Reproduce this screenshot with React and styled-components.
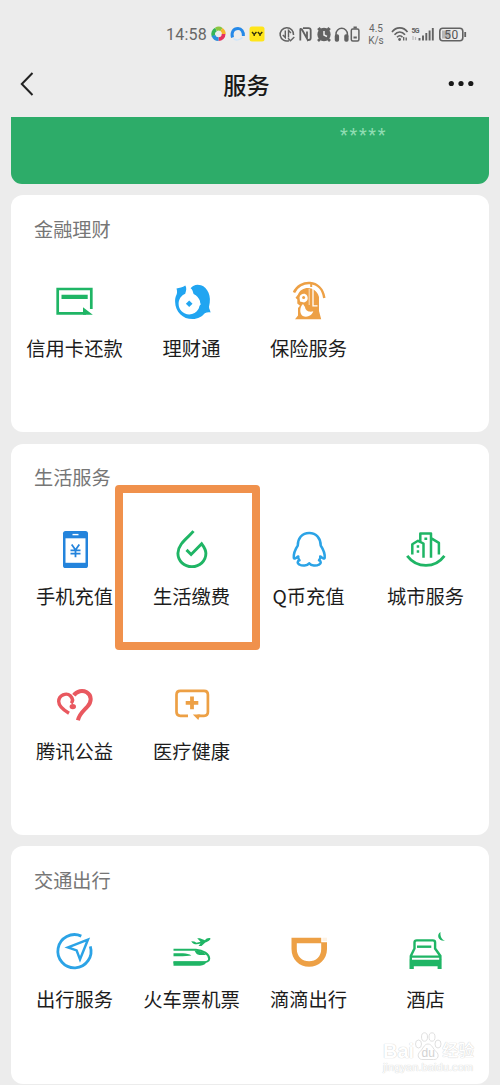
import React from 'react';
import styled, { createGlobalStyle } from 'styled-components';

const GREEN = '#1fb565';
const BLUE = '#2ba3e6';
const ORANGE = '#eda045';

const GlobalStyle = createGlobalStyle`
  * {
    box-sizing: border-box;
  }
  body {
    margin: 0;
    background: #ececec;
    font-family: "Noto Sans CJK SC", "Liberation Sans", sans-serif;
  }
`;

const Page = styled.div`
  position: relative;
  width: 500px;
  height: 1085px;
  overflow: hidden;
  background: #ececec;
`;

const StatusBar = styled.div`
  display: flex;
  align-items: center;
  height: 50px;
  padding: 18px 0 0 166px;
  color: #666;
`;

const Time = styled.span`
  width: 44px;
  font: 16px/20px Roboto, sans-serif;
  letter-spacing: 0.2px;
  padding-top: 1px;
`;

const Speed = styled.span`
  width: 20px;
  margin: 2px 5px 0 4px;
  font: 10px/12px Roboto, sans-serif;
  text-align: center;
`;

const StatusSvg = styled.svg`
  flex: none;
  overflow: visible;
`;

const NavBar = styled.header`
  display: flex;
  align-items: center;
  justify-content: space-between;
  height: 67px;
  padding: 0 25px 0 19px;
`;

const NavTitle = styled.h1`
  margin: 0;
  padding-left: 11px;
  color: #191919;
  font-size: 23.2px;
  line-height: 34px;
  font-weight: 500;
`;

const Wallet = styled.div`
  height: 67px;
  margin: 0 11px 11px;
  padding: 7px 0 0 329px;
  border-radius: 0 0 11px 11px;
  background: #2dac69;
  color: #8fdcb2;
  font: 18px/22px Roboto, sans-serif;
  letter-spacing: 1.7px;
`;

const CardTitle = styled.h2`
  height: 28px;
  margin: 0 0 34px 18px;
  color: #767676;
  font-size: 19.2px;
  line-height: 28px;
  font-weight: 400;
`;

const Label = styled.span`
  margin-top: 9px;
  color: #1c1c1c;
  font-size: 19.3px;
  line-height: 28px;
  white-space: nowrap;
`;

const Card = styled.section`
  height: ${(props) => props.$height}px;
  margin: 0 11px ${(props) => props.$gap || 0}px;
  padding: 20px 5px 0;
  border-radius: 12px;
  background: #fff;

  ${CardTitle} {
    line-height: ${(props) => (props.$tight ? 27 : 28)}px;
  }
  ${Label} {
    margin-top: ${(props) => (props.$tight ? 8 : 9)}px;
  }
`;

const Grid = styled.div`
  display: grid;
  grid-template-columns: repeat(4, 117px);
  grid-auto-rows: 154.5px;
`;

const Item = styled.div`
  display: flex;
  flex-direction: column;
  align-items: center;
`;

const Icon = styled.svg`
  width: 48px;
  height: 48px;
  flex: none;
`;

const Highlight = styled.div`
  position: absolute;
  left: 115px;
  top: 485px;
  width: 145px;
  height: 165px;
  border: 8px solid #f0914c;
  border-radius: 4px;
`;

const Watermark = styled.div`
  position: absolute;
  left: 383px;
  top: 1031px;
  width: 92px;
  color: #fff;
  text-shadow: 0 0 1px #ccc, 0 0 1px #ddd;
  font-family: "Liberation Sans", "Noto Sans CJK SC", sans-serif;
`;

const WatermarkLine = styled.div`
  display: flex;
  align-items: flex-end;
  height: 30px;
  font-size: 20px;
  line-height: 20px;
  font-weight: 700;
`;

const Paw = styled.svg`
  flex: none;
  text-shadow: none;
`;

const WatermarkCn = styled.span`
  font-size: 16px;
  font-weight: 500;
`;

const WatermarkUrl = styled.div`
  font-size: 11.2px;
  line-height: 12px;
`;

const CreditCard = () => (
  <Icon viewBox="0 0 48 48" fill={GREEN}>
    <path d="M40.3 32V12H6.7v24.3H35" fill="none" stroke={GREEN} strokeWidth="2.7" />
    <path d="M10.5 17.8h26.2v4.2H10.5zM32 30.3L41.8 37.7H32z" />
  </Icon>
);

const Licaitong = () => (
  <Icon viewBox="0 0 48 48" fill="#21a5f1">
    <path d="M17.3 8.6C14.5 11 11.5 10.8 8.5 11.4C9.3 14 9.2 15.5 8.6 17.5C7.4 20 7 22 7.1 24.7C7.3 35 14.8 42.1 24.6 42.1C30 42.1 34.3 39.3 36.8 36.3C38.5 35.3 40.5 35 42.5 35.4C42.5 33.5 40.8 31.5 41 29.7C44 19 39.5 10.5 33 8.3C28.8 6.9 25.2 8 22.6 11.2C24.5 12.2 25 15 25.6 16.9C28.8 18.4 31 20.9 32 24C31.7 25.3 32.8 26.3 32.6 27.8C31 28.5 31.5 30.2 30.6 31.7C28.5 35.3 25.1 37.4 21.2 37.4C15.2 37.4 10.6 32.6 10.6 26.7C10.6 22 13.4 18.3 17.2 16.7C18.4 13.4 18.8 11 17.3 8.6Z" />
    <path d="M21.2 23.4L24.5 26.7L21.2 30L17.9 26.7Z" />
  </Icon>
);

const Insurance = () => (
  <Icon viewBox="0 0 48 48" fill="none" stroke={ORANGE}>
    <path d="M9 15.5C14.5 2.5 36.5 1.5 39.3 21" strokeWidth="2.5" />
    <path d="M13 17.5C16.5 8.5 31 8.5 34 20V34L36.2 42.3H10L13 38.5V31L15 28.8L12.3 26.5V22.5L10.5 20.8Z" fill={ORANGE} stroke="none" />
    <path d="M14.5 20.5C15 16.8 20 15.5 22 18.5C23.8 22 22 24.5 19 25.5L15 24.5Z" fill="#fff" stroke="none" />
    <path d="M18 27C14.6 30 14.3 36.5 17.8 39C21.8 41 26.8 38.8 28.3 34.3C24.5 35.5 20.3 34 20 30Z" fill="#fff" stroke="none" />
    <circle cx="18.6" cy="20.4" r="1.5" fill={ORANGE} stroke="none" />
    <path d="M26.2 6V10" strokeWidth="2" />
    <path d="M28 10.5V28.8H32.5" stroke="#fff" strokeWidth="1.3" />
    <path d="M24.2 12V28" stroke="#fff" strokeWidth="0.7" />
  </Icon>
);

const Phone = () => (
  <Icon viewBox="0 0 48 48" fill="none" stroke="#2484dc">
    <rect x="12" y="5" width="25" height="37" rx="2.6" fill="#2484dc" stroke="none" />
    <path d="M14.5 12.3h20v24.5h-20z" fill="#fff" stroke="none" />
    <path d="M21.5 8.6h6" stroke="#fff" strokeWidth="1.4" />
    <path d="M20.7 18.5L24.5 24L28.3 18.5M24.5 24V31.3M19.5 24.3H29.5M19.5 27.6H29.5" strokeWidth="1.8" />
  </Icon>
);

const Droplet = () => (
  <Icon viewBox="0 0 48 48" fill="none" stroke={GREEN} strokeWidth="2.9">
    <path d="M25.5 5.2C20.5 11.3 9.9 17.8 9.9 27.3C9.9 35 16.1 40.6 23.9 40.6C31.7 40.6 37.9 35 37.9 27.3C37.9 23.5 35.7 20.4 33.7 17.8L23.1 28.5L18.5 23.9" />
  </Icon>
);

const QCoin = () => (
  <Icon viewBox="0 0 48 48" fill="none" stroke={BLUE} strokeWidth="2.5" strokeLinejoin="round" strokeLinecap="round">
    <path d="M24.2 7C17 7 12.8 12.3 12.8 19.5C10.5 23 8.4 27 8.8 31.7C9.3 34.2 12 30.8 13.3 30.5C12.7 32.5 13.8 33 14.5 34.3C12.2 35 12 37.5 14.3 38.5C17.5 40.2 22 39.8 24.2 37.3C26.4 39.8 31 40.2 34.2 38.5C36.4 37.5 36.2 35 34 34.3C34.7 33 35.8 32.5 35.2 30.5C36.5 30.8 39.2 34.2 39.7 31.7C40.1 27 38 23 35.7 19.5C35.7 12.3 31.4 7 24.2 7Z" />
  </Icon>
);

const City = () => (
  <Icon viewBox="0 0 48 48" fill="none" stroke={GREEN} strokeWidth="2.5" strokeLinejoin="round">
    <path d="M5.2 29.8C15 42.6 33 42.6 42.4 29.8" strokeWidth="2.8" />
    <path d="M10.3 28.5V18.3L16 14.8L21.5 17.5V31.8M18.3 15.5V7.6H29V31.8M29 12.2L36.9 16.8V28.5" />
    <path d="M14.7 20.5h2.5M14.7 25.5h2.5M22.4 12.8H25.2" />
  </Icon>
);

const Charity = () => (
  <Icon viewBox="0 0 48 48" fill="none" stroke="#e9585f" strokeWidth="4">
    <path d="M22.8 14.2C26 9.8 31.5 8.9 35.7 11.2C41.3 14.6 40.5 21 36.5 25.5C33 29.5 28.5 32.5 26.9 39.3" />
    <path d="M18 32.3C13 29.3 7.7 25.7 7.7 20.5C7.7 14 15.5 11.2 19.3 14.8C22 17.6 21.8 20.5 20.2 22.3" strokeWidth="3.4" />
    <ellipse cx="21.8" cy="25.6" rx="3.2" ry="2.6" fill="#e9585f" stroke="none" />
  </Icon>
);

const Medical = () => (
  <Icon viewBox="0 0 48 48" fill="none" stroke={ORANGE} strokeWidth="2.7">
    <path d="M20 34.8H12.3Q8.5 34.8 8.5 31V13.7Q8.5 9.8 12.3 9.8H36Q39.9 9.8 39.9 13.7V31Q39.9 34.8 36 34.8H29.5" />
    <path d="M24.8 33.4H32.3L30.3 39Z" fill={ORANGE} stroke="none" />
    <path d="M24 15.6V28.2M17.7 21.9H30.3" strokeWidth="3.8" />
  </Icon>
);

const Travel = () => (
  <Icon viewBox="0 0 48 48" fill="none" stroke={BLUE} strokeWidth="2.8">
    <path d="M30.3 8.1A16.6 16.6 0 1 0 39.3 18.3" />
    <path d="M36.9 11.6L17 19.4L25.6 22.4L29 31.4Z" strokeWidth="2.5" />
  </Icon>
);

const Train = () => (
  <Icon viewBox="0 0 48 48" fill={GREEN}>
    <path d="M5.5 21.7H28C35 22 41.2 26.4 41.2 30.7C41.2 33 38 34.4 35 34.4H5.5" fill="none" stroke={GREEN} strokeWidth="2.1" />
    <path d="M5.5 33.6H38.5C38 36 35.5 37.7 32 37.7H5.5z" />
    <path d="M5.5 25.2H15C18.5 25.3 21.5 26 23.4 27.6C20 28.3 11 28.4 5.5 28.2zM26.5 22.5C31 22 36.5 24.2 38 27H31.5C28.5 26.5 27.5 24.8 26.5 22.5z" />
    <path d="M23.2 13.2L26.3 13.6L28.5 14.8L32.5 13.7L29.2 10.3L31.8 10.2L37 12.2C38 10.7 40.5 9.6 42.3 10.3C43.2 11.8 39.5 13.7 37.3 14.6L33.5 18H30.5L32.5 15.6C29 16.7 25.4 17 23.2 13.2z" />
  </Icon>
);

const Didi = () => (
  <Icon viewBox="0 0 48 48" fill={ORANGE}>
    <path d="M6.5 9.7H36.2V15.2H11.8V21C11.8 28.5 17.3 33.3 24.1 33.3C31 33.3 36.2 28.5 36.2 21V14.3H42V21C42 31.7 33.8 38.7 24.1 38.7C14.3 38.7 6.5 31.7 6.5 21z" />
    <path d="M37.4 9.7h4.6v3.4h-4.6z" fill="#fdf1e2" />
  </Icon>
);

const Hotel = () => (
  <Icon viewBox="0 0 48 48" fill="none" stroke={GREEN} strokeWidth="2.4">
    <path d="M8.8 32V28L12.5 20.5V14.5Q12.5 12.4 14.8 12.4H30.8Q33.1 12.4 33.1 14.5V20.5L38.4 28V32M9.5 28.6H38" />
    <path d="M15 18.7H29.3" />
    <path d="M7.5 31.7H39.6V41H35.6V38.3H11.8V41H7.5z" fill={GREEN} stroke="none" />
    <path d="M38.5 4C34.5 6.5 35.5 13.3 43 12.7C39.5 11.5 38 8 38.5 4z" fill={GREEN} stroke="none" />
  </Icon>
);

const finance = [
  { label: '信用卡还款', icon: CreditCard },
  { label: '理财通', icon: Licaitong },
  { label: '保险服务', icon: Insurance },
];

const life = [
  { label: '手机充值', icon: Phone },
  { label: '生活缴费', icon: Droplet },
  { label: 'Q币充值', icon: QCoin },
  { label: '城市服务', icon: City },
  { label: '腾讯公益', icon: Charity },
  { label: '医疗健康', icon: Medical },
];

const transport = [
  { label: '出行服务', icon: Travel },
  { label: '火车票机票', icon: Train },
  { label: '滴滴出行', icon: Didi },
  { label: '酒店', icon: Hotel },
];

const ServiceCard = ({ title, items, height, gap, tight }) => (
  <Card $height={height} $gap={gap} $tight={tight}>
    <CardTitle>{title}</CardTitle>
    <Grid>
      {items.map(({ label, icon: ItemIcon }) => (
        <Item key={label}>
          <ItemIcon />
          <Label>{label}</Label>
        </Item>
      ))}
    </Grid>
  </Card>
);

// colourful app notifications, left half of the status bar
const Notifications = () => (
  <StatusSvg width="56" height="20" viewBox="210 24 56 20" fill="none">
    <g strokeWidth="3.8">
      <path d="M213.5 36A5.2 5.2 0 0 1 216 29.5" stroke="#35b558" />
      <path d="M216 29.3A5.2 5.2 0 0 1 221.5 29.5" stroke="#8bc63f" />
      <path d="M221.5 29.5A5.2 5.2 0 0 1 223.8 34" stroke="#f6b52c" />
      <path d="M223.6 34A5.2 5.2 0 0 1 218.5 39.2" stroke="#e5315f" />
      <path d="M218.5 39.2A5.2 5.2 0 0 1 213.5 35.5" stroke="#2a8fdc" />
    </g>
    <path d="M232.5 37.5C231 32 233.5 28.5 238 28.5C241.5 28.5 243.6 31.5 243.4 36" stroke="#2589e8" strokeWidth="3" />
    <path d="M233.5 38.5C235 40.5 240 40.5 242.5 37.5" stroke="#cde5fb" strokeWidth="1.5" />
    <rect x="249.5" y="26.5" width="15" height="15" rx="2.5" fill="#ffe51a" />
    <path d="M252 32L254.2 34.4L256.5 32M254.2 34V36M257.8 32L260 34.4L262.3 32M260 34V36" stroke="#33300b" strokeWidth="1.4" />
  </StatusSvg>
);

const SystemIcons = () => (
  <StatusSvg width="84" height="20" viewBox="278 24 84 20" fill="none" stroke="#626262" strokeWidth="1.5">
    <path d="M289 40.7A6.7 6.7 0 1 1 293.5 35" />
    <path d="M285.3 30.5V37.5L282.8 35M288.5 37.5V30.5L291 33M288 38.2L290.5 40.8L294.3 37" strokeWidth="1.4" />
    <path d="M300.3 40.5V29.8Q300.3 28.3 301.8 29.2L307 38.5V31.5M303 28.2H308.5Q310.7 28.2 310.7 30.3V38Q310.7 40 308.5 40H307" strokeWidth="1.8" />
    <circle cx="324" cy="34.5" r="5.9" fill="#626262" />
    <path d="M318 30L320.5 28M330 30L327.5 28M320 39L318 41M328 39L330 41" strokeWidth="2.6" />
    <path d="M324 31V35L327 36.5" stroke="#eee" />
    <path d="M336 37V34A5.7 5.7 0 0 1 347.4 34V37" />
    <rect x="335.5" y="35" width="2.8" height="6" rx="1" fill="#626262" />
    <rect x="345" y="35" width="2.8" height="6" rx="1" fill="#626262" />
    <rect x="351.3" y="29" width="7.6" height="12" rx="1.5" />
    <path d="M353.5 27.5H356.8M353.5 37.6H356.8" strokeWidth="2" />
  </StatusSvg>
);

const Connectivity = () => (
  <StatusSvg width="78" height="20" viewBox="391 24 78 20" fill="none" stroke="#626262" strokeWidth="1.6">
    <path d="M392 32C396 26.5 403.5 26.5 407.5 32M394.5 34.8C397.5 31 402 31 405 34.8M397 37.3C398.8 35.3 401 35.3 402.5 37.3" />
    <circle cx="399.6" cy="39.5" r="1.4" fill="#626262" stroke="none" />
    <path d="M403.7 37V40.5M406.2 37.5V40.5" strokeWidth="1.3" />
    <text x="411.5" y="33" fill="#626262" stroke="none" fontFamily="Roboto" fontSize="7" fontWeight="700" textLength="8">5G</text>
    <path d="M413 36V40M415.5 37V40" stroke="#bbb" strokeWidth="1.2" />
    <path d="M419.5 40.5V38M423 40.5V35.5M426.3 40.5V33M429.6 40.5V30.5M432.8 40.5V28" strokeWidth="1.9" />
    <rect x="439.8" y="28.2" width="23" height="12.5" rx="3" />
    <rect x="442" y="30.5" width="8.5" height="8" fill="#b6b6b6" stroke="none" />
    <path d="M465.2 32V37" strokeWidth="1.8" />
    <text x="444.2" y="38.8" fill="#555" stroke="none" fontFamily="Roboto" fontSize="12" textLength="14">50</text>
  </StatusSvg>
);

const App = () => {
  return (
    <>
      <GlobalStyle />
      <Page>
        <StatusBar>
          <Time>14:58</Time>
          <Notifications />
          <svg width="12" height="20" />
          <SystemIcons />
          <Speed>4.5 K/s</Speed>
          <Connectivity />
        </StatusBar>
        <NavBar>
          <svg width="16" height="26" viewBox="0 0 16 26" fill="none" stroke="#222" strokeWidth="2">
            <path d="M13.5 2L2.8 13L13.5 24" />
          </svg>
          <NavTitle>服务</NavTitle>
          <svg width="28" height="8" viewBox="0 0 28 8" fill="#191919">
            <circle cx="4.3" cy="3.5" r="2.6" />
            <circle cx="14" cy="3.5" r="2.6" />
            <circle cx="23.8" cy="3.5" r="2.6" />
          </svg>
        </NavBar>
        <Wallet>*****</Wallet>
        <ServiceCard title="金融理财" items={finance} height={237} gap={12} />
        <ServiceCard title="生活服务" items={life} height={391} gap={11} tight />
        <ServiceCard title="交通出行" items={transport} height={238} />
        <Highlight />
        <Watermark>
          <WatermarkLine>
            Bai
            <Paw width="28" height="29" viewBox="0 0 28 29" fill="#fff" stroke="#ddd" strokeWidth="0.9">
              <ellipse cx="4.5" cy="12" rx="3" ry="4" />
              <ellipse cx="10.5" cy="5" rx="3" ry="4.2" />
              <ellipse cx="18" cy="5" rx="3" ry="4.2" />
              <ellipse cx="24" cy="12" rx="3" ry="4" />
              <path d="M14 12C10 12 9 17 6 19.5C2.5 23 4.5 28 9 27.5H19.5C24 28 26 23 22 19.5C19 17 18 12 14 12z" />
              <text x="7.5" y="25" fill="#d2d2d2" stroke="none" fontFamily="Liberation Sans" fontSize="12" fontWeight="400">du</text>
            </Paw>
            <WatermarkCn>经验</WatermarkCn>
          </WatermarkLine>
          <WatermarkUrl>jingyan.baidu.com</WatermarkUrl>
        </Watermark>
      </Page>
    </>
  );
};

export default App;
